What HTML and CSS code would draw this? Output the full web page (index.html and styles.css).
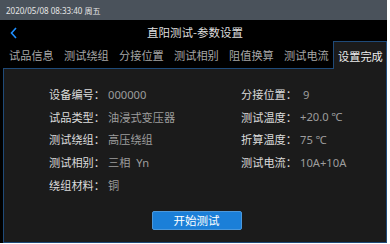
FILE: index.html
```html
<!DOCTYPE html>
<html lang="zh">
<head>
<meta charset="utf-8">
<link rel="stylesheet" href="styles.css">
</head>
<body>
<div class="app">
  <div class="status">2020/05/08 08:33:40 周五</div>
  <div class="titlebar">
    <div class="back">
      <svg width="8" height="12" viewBox="0 0 8 12"><path d="M6 1 L1.5 6 L6 11" fill="none" stroke="#1e8fff" stroke-width="1.6"/></svg>
    </div>
    <div class="title">直阳测试-参数设置</div>
    <div></div>
  </div>
  <div class="tabs">
    <div class="tabs-inner">
      <div class="tab">试品信息</div>
      <div class="tab">测试绕组</div>
      <div class="tab">分接位置</div>
      <div class="tab">测试相别</div>
      <div class="tab">阻值换算</div>
      <div class="tab">测试电流</div>
      <div class="tab active">设置完成</div>
    </div>
  </div>
  <div class="panel">
    <div class="grid">
      <div class="field"><span class="label">设备编号：</span><span class="value">000000</span></div>
      <div class="field"><span class="label">分接位置：</span><span class="value">&nbsp;9</span></div>
      <div class="field"><span class="label">试品类型：</span><span class="value">油浸式变压器</span></div>
      <div class="field"><span class="label">测试温度：</span><span class="value">+20.0 ℃</span></div>
      <div class="field"><span class="label">测试绕组：</span><span class="value">高压绕组</span></div>
      <div class="field"><span class="label">折算温度：</span><span class="value">75 ℃</span></div>
      <div class="field"><span class="label">测试相别：</span><span class="value">三相&nbsp;&nbsp;Yn</span></div>
      <div class="field"><span class="label">测试电流：</span><span class="value">10A+10A</span></div>
      <div class="field"><span class="label">绕组材料：</span><span class="value">铜</span></div>
    </div>
    <div class="actions">
      <button class="start">开始测试</button>
    </div>
  </div>
</div>
</body>
</html>
```
FILE: styles.css
```css
html, body {
  margin: 0;
  padding: 0;
  background: #ffffff;
}
.app {
  width: 387px;
  height: 243px;
  background: #000000;
  font-family: "Noto Sans CJK SC", "Noto Sans", sans-serif;
  display: flex;
  flex-direction: column;
  overflow: hidden;
}
.status {
  height: 20px;
  line-height: 21px;
  background: #4a525b;
  color: #e6e6e6;
  font-family: "Noto Sans", "Noto Sans CJK SC", sans-serif;
  font-size: 8px;
  padding-left: 6px;
  flex: none;
}
.titlebar {
  height: 21px;
  display: grid;
  grid-template-columns: 1fr auto 1fr;
  align-items: center;
  flex: none;
}
.back {
  padding-left: 10px;
  padding-top: 4px;
  display: flex;
  align-items: center;
}
.title {
  color: #dedede;
  font-size: 11.5px;
  line-height: 14px;
  padding-top: 3px;
  padding-left: 3px;
}
.tabs {
  height: 28px;
  flex: none;
}
.tabs-inner {
  margin-left: 3px;
  width: 382px;
  height: 27px;
  border-bottom: 1px solid #1f4a78;
  display: flex;
  padding-left: 2px;
  box-sizing: content-box;
}
.tab {
  width: 55px;
  flex: none;
  padding-left: 4px;
  box-sizing: border-box;
  color: #a6a6a6;
  font-size: 11.2px;
  display: flex;
  align-items: center;
  padding-top: 1px;
  white-space: nowrap;
}
.tab.active {
  flex: 1;
  width: auto;
  min-width: 0;
  margin-left: -2px;
  margin-bottom: -1px;
  padding-left: 4px;
  padding-top: 0;
  background: #1b1b1b;
  border: 1px solid #1f4a78;
  border-bottom: none;
  color: #ececec;
}
.panel {
  margin-left: 3px;
  width: 384px;
  box-sizing: border-box;
  flex: 1;
  background: #1b1b1b;
  border: 1px solid #1f4a78;
  border-top: none;
  padding-top: 14px;
}
.grid {
  margin-left: 45px;
  display: grid;
  grid-template-columns: 192px auto;
  grid-auto-rows: 22.6px;
}
.field {
  display: flex;
  align-items: center;
  font-size: 11.2px;
  white-space: nowrap;
}
.label {
  color: #dcdcdc;
  width: 59px;
  flex: none;
}
.value {
  color: #9d9d9d;
  font-family: "Noto Sans", "Noto Sans CJK SC", sans-serif;
}
.actions {
  display: flex;
  justify-content: center;
  padding-left: 3px;
  margin-top: 15px;
}
.start {
  width: 90px;
  height: 19px;
  background: #1b7fd8;
  border: 1px solid #4b98dc;
  border-radius: 2px;
  color: #ffffff;
  font-family: "Noto Sans CJK SC", sans-serif;
  font-size: 11.5px;
  padding: 0;
  line-height: 16px;
}
```
